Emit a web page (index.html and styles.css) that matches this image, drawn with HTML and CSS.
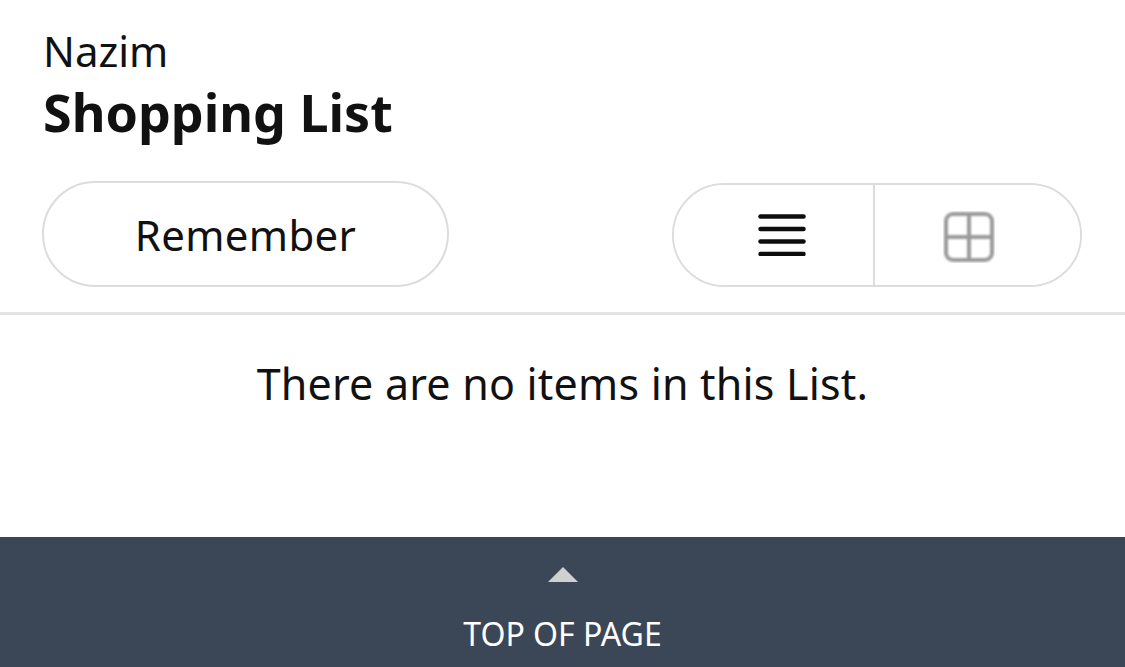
FILE: index.html
```html
<!DOCTYPE html>
<html>
<head>
<meta charset="utf-8">
<link rel="stylesheet" href="styles.css">
</head>
<body>
<div class="page">
  <header class="head">
    <div class="owner">Nazim</div>
    <h1 class="title">Shopping List</h1>
    <div class="controls">
      <button class="pill remember">Remember</button>
      <div class="toggle">
        <button class="seg seg-list" aria-label="List view">
          <svg width="48" height="42" viewBox="0 0 48 42">
            <g stroke="#111" stroke-width="4.5" stroke-linecap="round" filter="url(#blur1)">
              <line x1="2.5" y1="2.5" x2="45.5" y2="2.5"/>
              <line x1="2.5" y1="15" x2="45.5" y2="15"/>
              <line x1="2.5" y1="27.5" x2="45.5" y2="27.5"/>
              <line x1="2.5" y1="40" x2="45.5" y2="40"/>
            </g>
            <defs><filter id="blur1"><feGaussianBlur stdDeviation="0.5"/></filter></defs>
          </svg>
        </button>
        <button class="seg seg-grid" aria-label="Grid view">
          <svg width="52" height="52" viewBox="0 0 52 52">
            <g fill="none" stroke="#9a9a9a" stroke-width="4" filter="url(#blur)">
              <rect x="3" y="3" width="46" height="46" rx="7"/>
              <line x1="26" y1="3" x2="26" y2="49"/>
              <line x1="3" y1="26" x2="49" y2="26"/>
            </g>
            <defs><filter id="blur"><feGaussianBlur stdDeviation="0.8"/></filter></defs>
          </svg>
        </button>
      </div>
    </div>
  </header>
  <div class="rule"></div>
  <p class="empty">There are no items in this List.</p>
  <footer class="foot">
    <span class="tri"></span>
    <span class="top">TOP OF PAGE</span>
  </footer>
</div>
</body>
</html>
```
FILE: styles.css
```css
html, body {
  margin: 0;
  padding: 0;
  background: #fff;
}
body {
  font-family: "Noto Sans", "Open Sans", sans-serif;
  color: #111;
  width: 1125px;
  height: 667px;
  overflow: hidden;
}
.page {
  display: flex;
  flex-direction: column;
  height: 667px;
}
.head {
  padding: 26px 43px 0 42px;
}
.owner {
  font-size: 42px;
  line-height: 50px;
  padding-left: 1px;
}
.title {
  margin: 4px 0 0 1px;
  font-size: 52px;
  line-height: 64px;
  font-weight: 700;
}
.controls {
  margin-top: 37px;
  display: flex;
  justify-content: space-between;
  align-items: flex-end;
}
button {
  font-family: inherit;
  background: #fff;
  color: #111;
  padding: 0;
  cursor: pointer;
}
.pill.remember {
  width: 407px;
  height: 106px;
  border: 2px solid #dcdcdc;
  border-radius: 53px;
  font-size: 42px;
  letter-spacing: 0.3px;
}
.toggle {
  width: 410px;
  height: 104px;
  box-sizing: border-box;
  border: 2px solid #dcdcdc;
  border-radius: 52px;
  display: flex;
  overflow: hidden;
}
.seg {
  flex: 1;
  border: 0;
  display: flex;
  align-items: center;
  justify-content: center;
}
.seg-list {
  flex: 0 0 201px;
  box-sizing: border-box;
  border-right: 2px solid #dcdcdc;
}
.seg-list svg { margin-left: 16px; }
.seg-grid svg { margin-right: 18px; margin-top: 3px; }
.rule {
  margin-top: 25px;
  height: 3px;
  background: #e4e4e4;
}
.empty {
  margin: 44px 0 0;
  text-align: center;
  font-size: 43px;
  line-height: 50px;
  letter-spacing: 0.2px;
}
.foot {
  margin-top: auto;
  height: 130px;
  background: #3b4657;
  color: #fff;
  display: flex;
  flex-direction: column;
  align-items: center;
}
.tri {
  margin-top: 30px;
  width: 0;
  height: 0;
  border-left: 15px solid transparent;
  border-right: 15px solid transparent;
  border-bottom: 15px solid #d0d0d0;
}
.top {
  margin-top: 32px;
  font-size: 32px;
  line-height: 40px;
}
```
